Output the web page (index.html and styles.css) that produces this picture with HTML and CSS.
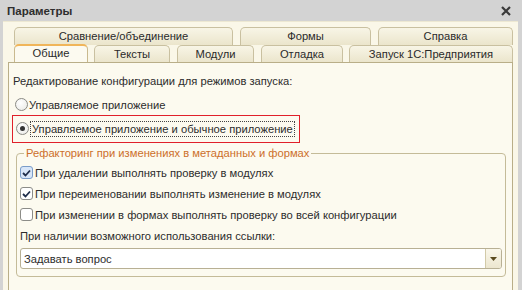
FILE: index.html
```html
<!DOCTYPE html>
<html lang="ru">
<head>
<meta charset="utf-8">
<link rel="stylesheet" href="styles.css">
</head>
<body>
<div class="window">
  <div class="titlebar">
    <span class="title">Параметры</span>
    <svg class="close" width="10" height="10" viewBox="0 0 10 10"><path d="M1 1L9 9M9 1L1 9" stroke="#3a3a3a" stroke-width="2.2"/></svg>
  </div>
  <div class="client">
    <div class="tabrow back">
      <div class="tab w1">Сравнение/объединение</div>
      <div class="tab w2">Формы</div>
      <div class="tab w3">Справка</div>
    </div>
    <div class="tabrow front">
      <div class="tab active t1">Общие</div>
      <div class="tab t2">Тексты</div>
      <div class="tab t3">Модули</div>
      <div class="tab t4">Отладка</div>
      <div class="tab t5">Запуск 1С:Предприятия</div>
    </div>
    <div class="panel">
      <div class="caption">Редактирование конфигурации для режимов запуска:</div>
      <div class="radio row1"><span class="rb"></span><span>Управляемое приложение</span></div>
      <div class="highlight">
        <div class="radio"><span class="rb on"></span><span class="focus">Управляемое приложение и обычное приложение</span></div>
      </div>
      <div class="group">
        <div class="legend">Рефакторинг при изменениях в метаданных и формах</div>
        <div class="check first"><span class="cb on hover"><svg width="9" height="8" viewBox="0 0 9 8"><path d="M1 4L3.5 6.5L8 1.5" fill="none" stroke="#1e2d4a" stroke-width="1.8"/></svg></span><span>При удалении выполнять проверку в модулях</span></div>
        <div class="check"><span class="cb on"><svg width="9" height="8" viewBox="0 0 9 8"><path d="M1 4L3.5 6.5L8 1.5" fill="none" stroke="#1e2d4a" stroke-width="1.8"/></svg></span><span>При переименовании выполнять изменение в модулях</span></div>
        <div class="check"><span class="cb"></span><span>При изменении в формах выполнять проверку во всей конфигурации</span></div>
        <div class="label">При наличии возможного использования ссылки:</div>
        <div class="combo">
          <span class="value">Задавать вопрос</span>
          <span class="btn"><svg width="7" height="4" viewBox="0 0 7 4"><path d="M0 0H7L3.5 4Z" fill="#5a4a1e"/></svg></span>
        </div>
      </div>
    </div>
  </div>
</div>
</body>
</html>
```
FILE: styles.css
```css
* { box-sizing: border-box; }
html, body { margin: 0; padding: 0; }
body {
  width: 522px;
  height: 290px;
  overflow: hidden;
  font-family: "Liberation Sans", Arial, sans-serif;
  font-size: 11.2px;
  color: #2c2c2c;
}
.window {
  width: 522px;
  height: 290px;
  background: #d3d3d3;
  display: flex;
  flex-direction: column;
}
.titlebar {
  height: 21px;
  display: flex;
  align-items: center;
  justify-content: space-between;
  padding: 0 11px 0 7px;
}
.title {
  font-weight: bold;
  font-size: 11.5px;
  color: #2e2e2e;
}
.client {
  flex: 1;
  margin: 0 4px 0 3px;
  background: #faf7e8;
  border-top: 1px solid #ede8d2;
  padding: 5px 0 0 5px;
  display: flex;
  flex-direction: column;
}
.tabrow {
  display: flex;
  height: 18px;
}
.tabrow.back { gap: 7px; padding-left: 6px; }
.tabrow.front { padding-left: 6px; height: 17px; }
.tab {
  height: 18px;
  border: 1px solid #c9c0a0;
  border-bottom: none;
  border-radius: 5px 5px 0 0;
  background: linear-gradient(#f8f5e6, #ebe5cc);
  text-align: center;
  line-height: 17px;
  color: #2a2a2a;
}
.w1 { width: 219px; }
.w2 { width: 131px; }
.w3 { width: 135px; }
.front .tab { height: 17px; line-height: 16px; }
.t1 { width: 74px; }
.t2 { width: 76px; margin-left: 6px; }
.t3 { width: 77px; margin-left: 7px; }
.t4 { width: 82px; margin-left: 7px; }
.t5 { width: 164px; margin-left: 6px; }
.front .tab.active {
  background: #fcfaf0;
  border-color: #c9b98e;
  border-top: 2px solid #f0b55a;
  height: 18px;
  margin-top: -1px;
  line-height: 15px;
  position: relative;
  z-index: 1;
}
.panel {
  flex: 1;
  background: #fcfaef;
  border: 1px solid #b9ae88;
  border-bottom: none;
  width: 505px;
  padding: 10px 0 0 4px;
}
.caption { height: 17px; line-height: 17px; }
.radio {
  display: flex;
  align-items: center;
  height: 17px;
}
.row1 { margin-top: 6px; margin-left: 2px; }
.rb {
  width: 13px;
  height: 13px;
  border-radius: 50%;
  border: 1px solid #8a8a85;
  background: radial-gradient(circle at 40% 35%, #ffffff, #e8e8e4);
  margin-right: 1px;
  position: relative;
}
.rb.on::after {
  content: "";
  position: absolute;
  left: 3px; top: 3px;
  width: 5px; height: 5px;
  border-radius: 50%;
  background: #333;
}
.highlight {
  margin-top: 2px;
  margin-left: -1px;
  width: 288px;
  height: 28px;
  border: 1px solid #e0202a;
  padding: 4px 0 0 3px;
}
.focus {
  outline: 1px dotted #444;
  outline-offset: -1px;
  padding: 1px 2px;
  line-height: 14px;
}
.group {
  margin: 10px 0 0 3px;
  width: 490px;
  height: 124px;
  border: 1px solid #c4bb98;
  border-radius: 4px;
  padding: 0 0 0 3px;
}
.legend {
  display: block;
  width: max-content;
  height: 14px;
  padding: 0 2px;
  margin: -8px 0 0 4px;
  background: #fcfaef;
  color: #cc6f2a;
  line-height: 14px;
}
.check {
  display: flex;
  align-items: center;
  height: 21px;
}
.check.first { margin-top: 2px; }
.cb {
  width: 13px;
  height: 13px;
  border: 1px solid #8c8c88;
  border-radius: 3px;
  background: #fff;
  display: flex;
  align-items: center;
  justify-content: center;
  margin-right: 2px;
}
.cb.hover { background: #d8e6f8; border-color: #7a9cc8; }
.label { height: 21px; line-height: 23px; }
.combo {
  margin-top: 2px;
  width: 482px;
  height: 21px;
  border: 1px solid #b8b094;
  border-radius: 3px;
  background: #fff;
  display: flex;
  align-items: center;
  justify-content: space-between;
  padding-left: 3px;
  overflow: hidden;
}
.btn {
  width: 16px;
  height: 19px;
  background: linear-gradient(#faf7ea, #ece6cf);
  border-left: 1px solid #d2caa8;
  display: flex;
  align-items: center;
  justify-content: center;
}
```
